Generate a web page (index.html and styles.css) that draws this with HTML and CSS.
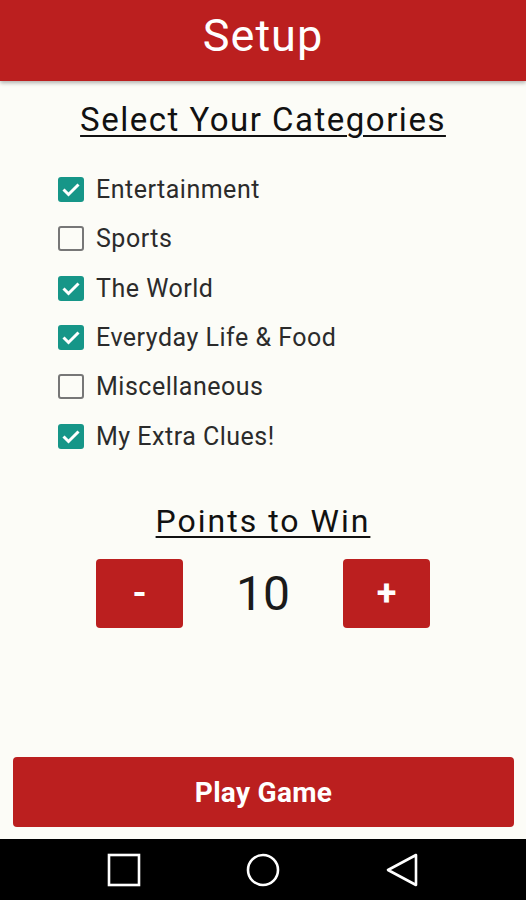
FILE: index.html
```html
<!DOCTYPE html>
<html lang="en">

<head>
    <meta charset="UTF-8">
    <meta name="viewport" content="width=device-width, initial-scale=1.0">
    <title>Setup</title>
    <link rel="stylesheet" href="styles.css">
</head>

<body>
    <div class="screen">
        <div id="title">Setup</div>

        <div class="content">
            <h2 class="section-title">Select Your Categories</h2>

            <div class="category-list">
                <label class="category"><span class="box checked"></span>Entertainment</label>
                <label class="category"><span class="box"></span>Sports</label>
                <label class="category"><span class="box checked"></span>The World</label>
                <label class="category"><span class="box checked"></span>Everyday Life &amp; Food</label>
                <label class="category"><span class="box"></span>Miscellaneous</label>
                <label class="category"><span class="box checked"></span>My Extra Clues!</label>
            </div>

            <h2 class="section-title points-title">Points to Win</h2>

            <div class="points-row">
                <div class="step-button">-</div>
                <div class="points">10</div>
                <div class="step-button">+</div>
            </div>
        </div>

        <div class="play-area">
            <div class="play-button">Play Game</div>
        </div>

        <!-- android navigation bar -->
        <div class="nav-bar">
            <svg width="40" height="40" viewBox="0 0 40 40">
                <rect x="5" y="5" width="30" height="30" fill="none" stroke="#fff" stroke-width="2.6" />
            </svg>
            <svg width="40" height="40" viewBox="0 0 40 40">
                <circle cx="20" cy="20" r="15" fill="none" stroke="#fff" stroke-width="2.6" />
            </svg>
            <svg width="40" height="40" viewBox="0 0 40 40">
                <path d="M34 5 L6 20 L34 35 Z" fill="none" stroke="#fff" stroke-width="2.6" stroke-linejoin="round" />
            </svg>
        </div>
    </div>
</body>

</html>
```

FILE: styles.css
```css
body {
    margin: 0;
    padding: 0;
    background-color: #fcfcf7;
    font-family: Roboto, "Liberation Sans", sans-serif;
}

.screen {
    display: flex;
    flex-direction: column;
    height: 900px;
}

#title {
    background-color: #bb1f1f;
    color: white;
    height: 81px;
    line-height: 72px;
    text-align: center;
    font-size: 45px;
    letter-spacing: 1px;
    box-shadow: 0 2px 4px rgba(0, 0, 0, 0.3);
    position: relative;
}

.content {
    flex: 1;
    display: flex;
    flex-direction: column;
}

.section-title {
    margin: 19px 0 0;
    font-size: 33px;
    font-weight: normal;
    line-height: 40px;
    letter-spacing: 1.5px;
    text-align: center;
    color: #111;
    text-decoration: underline;
    text-decoration-thickness: 2px;
    text-underline-offset: 4px;
}

.category-list {
    display: flex;
    flex-direction: column;
    margin: 25px 0 0 58px;
}

.category {
    display: flex;
    align-items: center;
    height: 49.3px;
    font-size: 25px;
    letter-spacing: 0.5px;
    color: #2b2b2b;
}

.box {
    box-sizing: border-box;
    width: 26px;
    height: 25px;
    margin-right: 12px;
    border: 2.5px solid #777;
    border-radius: 3px;
}

.box.checked {
    border: none;
    background-color: #169688;
    background-image: url("data:image/svg+xml,%3Csvg xmlns='http://www.w3.org/2000/svg' viewBox='0 0 26 25'%3E%3Cpath d='M5.5 12.5 L10.5 17.5 L20.5 7.5' fill='none' stroke='white' stroke-width='3'/%3E%3C/svg%3E");
}

.points-title {
    margin-top: 40px;
    font-size: 32px;
    letter-spacing: 2px;
}

.points-row {
    display: flex;
    justify-content: center;
    align-items: center;
    margin-top: 18px;
}

.step-button {
    width: 87px;
    height: 69px;
    background-color: #bb1f1f;
    color: white;
    border-radius: 4px;
    font-size: 36px;
    font-weight: bold;
    display: flex;
    align-items: center;
    justify-content: center;
}

.points {
    width: 160px;
    text-align: center;
    font-size: 48px;
    color: #1a1a1a;
}

.play-area {
    padding: 0 12px 12px 13px;
}

.play-button {
    height: 70px;
    background-color: #bb1f1f;
    color: white;
    border-radius: 4px;
    font-size: 28px;
    font-weight: bold;
    letter-spacing: 0.3px;
    display: flex;
    align-items: center;
    justify-content: center;
}

.nav-bar {
    height: 61px;
    background-color: black;
    display: flex;
    justify-content: center;
    align-items: center;
    gap: 99px;
}
```
